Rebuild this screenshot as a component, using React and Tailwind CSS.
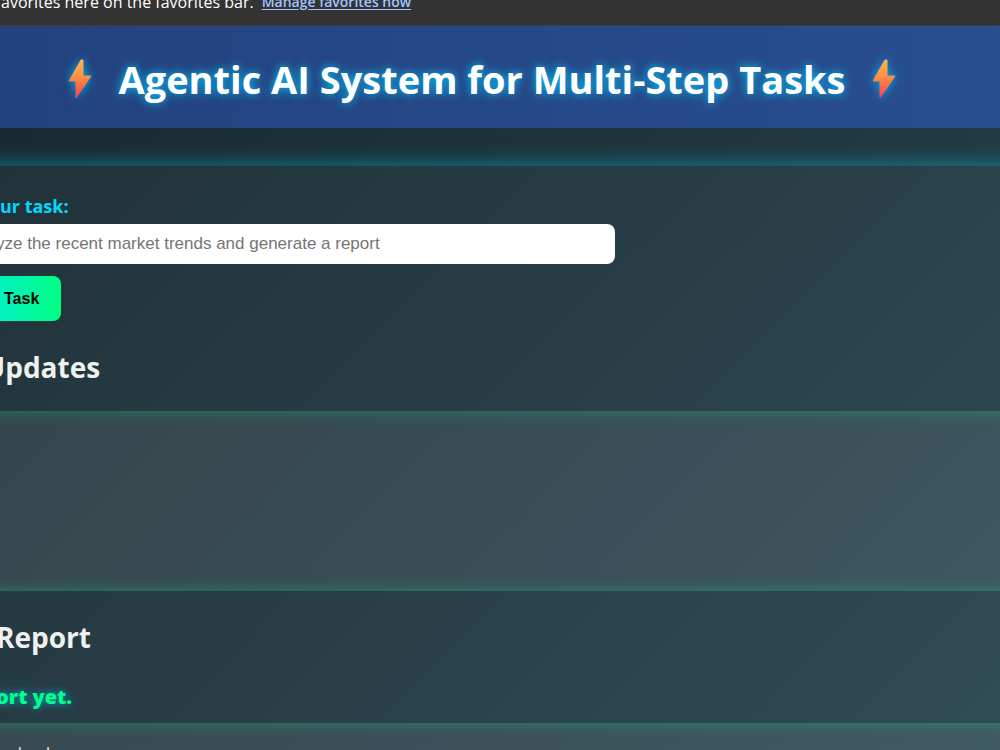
import { useState } from "react";

const BOLT = "M17 1 L5 22 L12 22 L12 39 L27 17 L19 17 L19 1 Z";

export default function App() {
    const [task, setTask] = useState("");

    return (
        <div className="min-h-screen h-screen flex flex-col overflow-hidden bg-linear-135 from-[#17282f] to-[#284550] font-['Open_Sans','Noto_Sans',sans-serif] text-[#f0f0f0]">
            <FavoritesBar />
            <Header />

            <main className="mt-[38px] -mx-10 px-10 grow bg-white/4 shadow-[0_0_20px_rgba(0,229,255,0.45)]">
                <form onSubmit={e => e.preventDefault()} className="pt-[26px]">
                    <label htmlFor="task" className="block text-lg leading-7 font-bold text-[#00d9ff]">ur task:</label>
                    <input
                        id="task"
                        type="text"
                        value={task}
                        onChange={e => setTask(e.target.value)}
                        placeholder="yze the recent market trends and generate a report"
                        className="block mt-1 w-[61.5%] h-10 rounded-r-lg bg-white -indent-1 pr-3 font-['Liberation_Sans',sans-serif] text-[17px] text-black placeholder:text-[#757575]"
                    />
                    <button
                        type="submit"
                        className="block mt-3 h-[45px] pl-1 pr-[22px] rounded-r-lg bg-linear-to-r from-[#00f2c0] to-[#00ff80] font-['Liberation_Sans',sans-serif] text-base font-bold text-black"
                    >
                        Task
                    </button>
                </form>

                <h2 className="-ml-4 mt-[26px] text-[28px] leading-10 font-bold">Updates</h2>
                <Panel className="mt-6 h-[180px]" />

                <h2 className="-ml-1 mt-[26px] text-[28px] leading-10 font-bold">Report</h2>
                <h3 className="-ml-1 mt-6 text-xl leading-8 font-extrabold text-[#00ff88] [text-shadow:0_0_8px_rgba(0,200,255,0.8)]">ort yet.</h3>
                <Panel className="mt-2.5 h-[180px] pt-[18px]">
                    <p className="pl-2 text-base leading-6">nload</p>
                </Panel>
            </main>
        </div>
    );
}

function FavoritesBar() {
    return (
        <div className="h-[26px] shrink-0 flex items-end pb-[11px] pl-px gap-2 overflow-hidden bg-[#333333] border-b border-[#3b3d42] whitespace-nowrap">
            <span className="text-base leading-6 text-white">avorites here on the favorites bar.</span>
            <a href="#favorites" className="text-sm leading-6 font-semibold text-[#a0c3ff] underline underline-offset-2">Manage favorites now</a>
        </div>
    );
}

function Header() {
    return (
        <header className="h-[102px] shrink-0 flex items-center justify-center gap-[22px] pt-1 pr-9 bg-linear-to-r from-[#23427e] to-[#274e91]">
            <Bolt id="bolt-left" />
            <h1 className="text-[38px] leading-[60px] font-bold text-white whitespace-nowrap [text-shadow:0_0_10px_#00c8ff]">
                Agentic AI System for Multi-Step Tasks
            </h1>
            <Bolt id="bolt-right" />
        </header>
    );
}

function Bolt({ id }) {
    return (
        <svg width="32" height="40" viewBox="0 0 32 40" className="shrink-0 overflow-visible drop-shadow-[0_0_5px_#00b4f0]" aria-hidden="true">
            <defs>
                <linearGradient id={id} x1="0" y1="0" x2="0" y2="1">
                    <stop offset="0" stopColor="#ffb34a" />
                    <stop offset="0.45" stopColor="#fb8f45" />
                    <stop offset="1" stopColor="#f43e55" />
                </linearGradient>
            </defs>
            <path d={BOLT} fill={`url(#${id})`} stroke={`url(#${id})`} strokeLinejoin="round" />
        </svg>
    );
}

function Panel({ className, children }) {
    return (
        <section className={`bg-white/8 shadow-[inset_0_0_15px_rgba(0,255,136,0.3)] -mx-10 px-10 ${className}`}>
            {children}
        </section>
    );
}
